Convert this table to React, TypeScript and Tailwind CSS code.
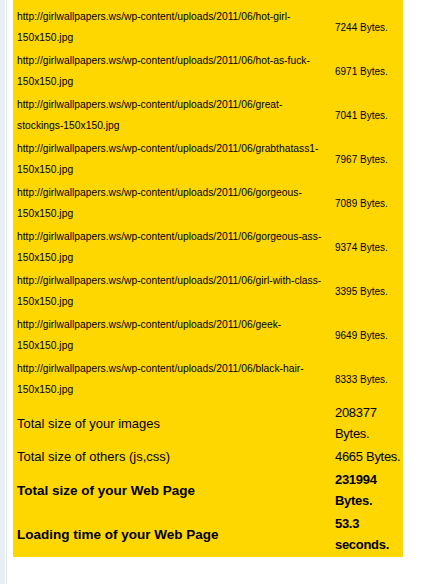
import React from "react";

const files = [
  { a: "http://girlwallpapers.ws/wp-content/uploads/2011/06/hot-girl-", b: "150x150.jpg", size: 7244 },
  { a: "http://girlwallpapers.ws/wp-content/uploads/2011/06/hot-as-fuck-", b: "150x150.jpg", size: 6971 },
  { a: "http://girlwallpapers.ws/wp-content/uploads/2011/06/great-", b: "stockings-150x150.jpg", size: 7041 },
  { a: "http://girlwallpapers.ws/wp-content/uploads/2011/06/grabthatass1-", b: "150x150.jpg", size: 7967 },
  { a: "http://girlwallpapers.ws/wp-content/uploads/2011/06/gorgeous-", b: "150x150.jpg", size: 7089 },
  { a: "http://girlwallpapers.ws/wp-content/uploads/2011/06/gorgeous-ass-", b: "150x150.jpg", size: 9374 },
  { a: "http://girlwallpapers.ws/wp-content/uploads/2011/06/girl-with-class-", b: "150x150.jpg", size: 3395 },
  { a: "http://girlwallpapers.ws/wp-content/uploads/2011/06/geek-", b: "150x150.jpg", size: 9649 },
  { a: "http://girlwallpapers.ws/wp-content/uploads/2011/06/black-hair-", b: "150x150.jpg", size: 8333 },
];

// summary rows, value split in lines the way the narrow column wraps them
const totals = [
  { label: "Total size of your images", value: ["208377", "Bytes."], bold: false },
  { label: "Total size of others (js,css)", value: ["4665 Bytes."], bold: false },
  { label: "Total size of your Web Page", value: ["231994", "Bytes."], bold: true },
  { label: "Loading time of your Web Page", value: ["53.3", "seconds."], bold: true },
];

export default function App() {
  return (
    <div className="flex h-[584px] w-[429px] bg-white text-black font-['Liberation_Sans',Arial,sans-serif]">
      {/* sidebar edge */}
      <div className="w-[5px] bg-[#e8eef3]" />
      <div className="w-px bg-white" />
      <div className="w-px bg-[#dde6ed]" />

      <div className="ml-[6px] self-start w-[390px] bg-[#ffd700] pt-[5px] pb-px">
        {files.map((f) => (
          <div key={f.a} className="flex items-center py-px">
            <div className="w-[318px] pl-1 text-[10.3px] leading-[21px] whitespace-nowrap">
              <div>{f.a}</div>
              <div>{f.b}</div>
            </div>
            <div className="pl-1 text-[10px] leading-[21px] whitespace-nowrap">{f.size} Bytes.</div>
          </div>
        ))}

        {totals.map((t) => (
          <div key={t.label} className={`flex items-center py-px leading-[21px] ${t.bold ? "font-bold" : ""}`}>
            <div className={`w-[318px] pl-1 whitespace-nowrap ${t.bold ? "text-[13.5px]" : "text-[13px]"}`}>{t.label}</div>
            <div className="pl-1 whitespace-nowrap text-[13px] tracking-[-0.3px]">
              {t.value.map((v) => (
                <div key={v}>{v}</div>
              ))}
            </div>
          </div>
        ))}
      </div>
    </div>
  );
}
